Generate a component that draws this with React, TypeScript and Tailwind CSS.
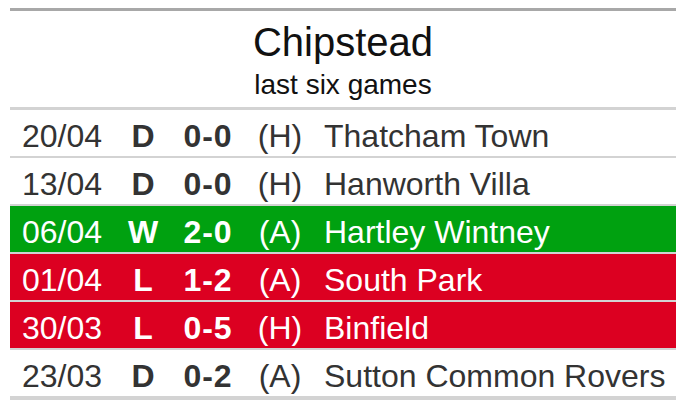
const games = [
  { date: '20/04', result: 'D', score: '0-0', venue: '(H)', team: 'Thatcham Town' },
  { date: '13/04', result: 'D', score: '0-0', venue: '(H)', team: 'Hanworth Villa' },
  { date: '06/04', result: 'W', score: '2-0', venue: '(A)', team: 'Hartley Wintney' },
  { date: '01/04', result: 'L', score: '1-2', venue: '(A)', team: 'South Park' },
  { date: '30/03', result: 'L', score: '0-5', venue: '(H)', team: 'Binfield' },
  { date: '23/03', result: 'D', score: '0-2', venue: '(A)', team: 'Sutton Common Rovers' },
];

const rowStyles: Record<string, string> = {
  W: 'bg-[#00a110] text-white',
  L: 'bg-[#dc0021] text-white',
  D: 'bg-white text-[#333333]',
};

export default function App() {
  return (
    <div className="w-[684px] h-[408px] bg-white pt-2 px-[10px] font-['Liberation_Sans',Arial,sans-serif]">
      <div className="w-[666px] border-t-[3px] border-[#a8a8a8]">
        <div className="h-[99px] flex flex-col items-center border-b-[3px] border-[#d3d3d3] text-[#111]">
          <div className="text-[40px] leading-none mt-[11px]">Chipstead</div>
          <div className="text-[28px] leading-none mt-[9px]">last six games</div>
        </div>
        {games.map((g, i) => {
          const last = i === games.length - 1;
          return (
            <div
              key={i}
              className={`flex items-center pt-[5px] text-[32px] leading-none ${rowStyles[g.result]} ${
                last ? 'h-[50px] border-b-4 border-[#d3d3d3]' : 'h-[48px] border-b-2 border-[#d3d3d3]'
              }`}
            >
              <div className="w-[108px] pl-[12px]">{g.date}</div>
              <div className="w-[50px] text-center font-bold">{g.result}</div>
              <div className="w-[80px] text-center font-bold tracking-[1px]">{g.score}</div>
              <div className="w-[64px] text-center">{g.venue}</div>
              <div className="pl-[12px] whitespace-nowrap">{g.team}</div>
            </div>
          );
        })}
      </div>
    </div>
  );
}
